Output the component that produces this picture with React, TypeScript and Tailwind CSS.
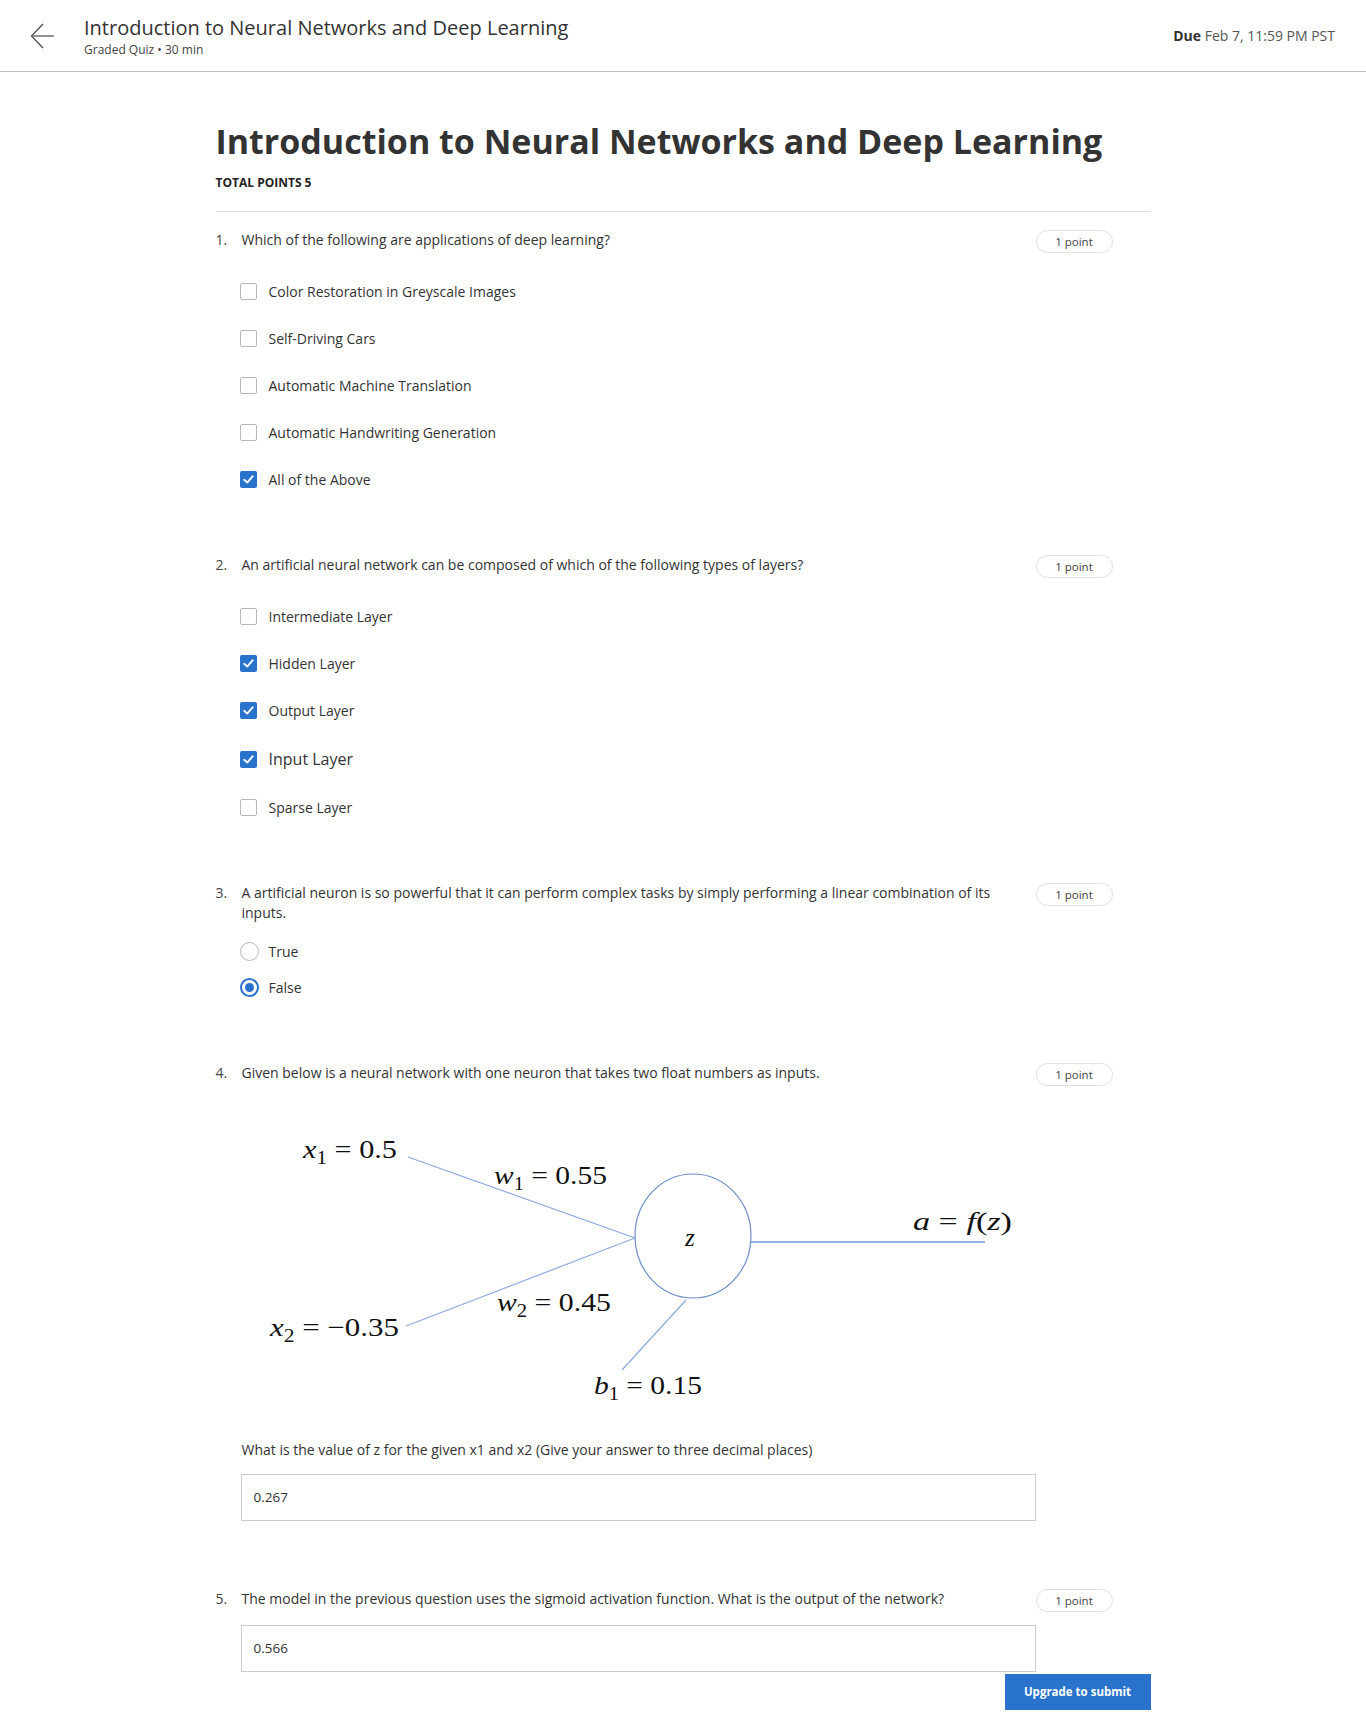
import React from "react";

const font = { fontFamily: "'Open Sans', 'Liberation Sans', sans-serif" };

function Pill() {
  return (
    <div className="ml-[24px] mr-[38px] flex h-[23px] w-[77px] shrink-0 items-center justify-center rounded-full border border-[#e1e1e1] text-[11.5px] text-[#444]">
      1 point
    </div>
  );
}

function Check({ checked }: { checked: boolean }) {
  if (checked) {
    return (
      <div className="flex h-[17px] w-[17px] shrink-0 items-center justify-center rounded-[2px] bg-[#2a73cc]">
        <svg width="13" height="13" viewBox="0 0 13 13" fill="none">
          <path d="M2.2 6.8 L5.2 9.6 L10.8 3.2" stroke="#fff" strokeWidth="1.9" strokeLinecap="round" strokeLinejoin="round" />
        </svg>
      </div>
    );
  }
  return <div className="h-[17px] w-[17px] shrink-0 rounded-[2px] border-[1.5px] border-[#b8b8b8] bg-white" />;
}

function Radio({ checked }: { checked: boolean }) {
  if (checked) {
    return (
      <div className="flex h-[19px] w-[19px] shrink-0 items-center justify-center rounded-full border-[2px] border-[#2a73cc]">
        <div className="h-[9px] w-[9px] rounded-full bg-[#2a73cc]" />
      </div>
    );
  }
  return <div className="h-[19px] w-[19px] shrink-0 rounded-full border-[1.5px] border-[#b8b8b8]" />;
}

function QuestionHead({ n, children }: { n: number; children: React.ReactNode }) {
  return (
    <div className="flex items-start">
      <div className="w-[26px] shrink-0 text-[14px] leading-[20px] text-[#444]">{n}.</div>
      <div className="flex-1 text-[14px] leading-[20px] text-[#333]">{children}</div>
      <Pill />
    </div>
  );
}

function CheckOption({ label, checked, big }: { label: string; checked: boolean; big?: boolean }) {
  return (
    <div className={big ? "flex h-[50px] items-center gap-[12px] pl-[24px]" : "flex h-[47px] items-center gap-[12px] pl-[24px]"}>
      <Check checked={checked} />
      <span className={big ? "text-[16px] text-[#333]" : "text-[14px] text-[#333]"}>{label}</span>
    </div>
  );
}

function RadioOption({ label, checked }: { label: string; checked: boolean }) {
  return (
    <div className="flex h-[36px] items-center gap-[10px] pl-[24px]">
      <Radio checked={checked} />
      <span className="text-[14px] text-[#333]">{label}</span>
    </div>
  );
}

function Diagram() {
  const serif = "'Liberation Serif', 'DejaVu Serif', serif";
  const line = "#8eaadb";
  return (
    <svg width="800" height="320" viewBox="0 0 800 320" className="block">
      <line x1="166" y1="52" x2="393" y2="133" stroke={line} strokeWidth="1.2" />
      <line x1="164" y1="221" x2="393" y2="133" stroke={line} strokeWidth="1.2" />
      <line x1="444" y1="195" x2="380" y2="265" stroke={line} strokeWidth="1.2" />
      <line x1="509" y1="137" x2="743" y2="137" stroke="#7c9bd6" strokeWidth="1.4" />
      <ellipse cx="451" cy="131" rx="58" ry="62" fill="#fff" stroke="#6f8cc4" strokeWidth="1.2" />
      <g fontFamily={serif} fill="#111" fontSize="26">
        <text x="61" y="53" textLength="94" lengthAdjust="spacingAndGlyphs">
          <tspan fontStyle="italic">x</tspan>
          <tspan fontSize="18" dy="6">1</tspan>
          <tspan dy="-6"> = 0.5</tspan>
        </text>
        <text x="252" y="79" textLength="113" lengthAdjust="spacingAndGlyphs">
          <tspan fontStyle="italic">w</tspan>
          <tspan fontSize="18" dy="6">1</tspan>
          <tspan dy="-6"> = 0.55</tspan>
        </text>
        <text x="443" y="141" fontStyle="italic" fontSize="25">z</text>
        <text x="671" y="125" textLength="99" lengthAdjust="spacingAndGlyphs">
          <tspan fontStyle="italic">a</tspan>
          <tspan> = </tspan>
          <tspan fontStyle="italic">f</tspan>
          <tspan>(</tspan>
          <tspan fontStyle="italic">z</tspan>
          <tspan>)</tspan>
        </text>
        <text x="255" y="206" textLength="114" lengthAdjust="spacingAndGlyphs">
          <tspan fontStyle="italic">w</tspan>
          <tspan fontSize="18" dy="6">2</tspan>
          <tspan dy="-6"> = 0.45</tspan>
        </text>
        <text x="28" y="231" textLength="129" lengthAdjust="spacingAndGlyphs">
          <tspan fontStyle="italic">x</tspan>
          <tspan fontSize="18" dy="6">2</tspan>
          <tspan dy="-6"> = −0.35</tspan>
        </text>
        <text x="352" y="289" textLength="108" lengthAdjust="spacingAndGlyphs">
          <tspan fontStyle="italic">b</tspan>
          <tspan fontSize="18" dy="6">1</tspan>
          <tspan dy="-6"> = 0.15</tspan>
        </text>
      </g>
    </svg>
  );
}

export default function App() {
  return (
    <div className="min-h-[1733px] w-full bg-white" style={font}>
      <header className="flex h-[72px] items-center justify-between border-b border-[#bdbdbd] pr-[31px]">
        <div className="flex items-center">
          <div className="ml-[30px] mr-[30px] flex h-[30px] w-[24px] items-center">
            <svg width="24" height="26" viewBox="0 0 24 26" fill="none">
              <path d="M13 1 L1.5 13 L13 25" stroke="#555" strokeWidth="1.4" />
              <path d="M1.5 13 H24" stroke="#666" strokeWidth="1.4" />
            </svg>
          </div>
          <div className="flex flex-col">
            <div className="text-[20px] leading-[26px] text-[#333]">Introduction to Neural Networks and Deep Learning</div>
            <div className="mt-[1px] text-[12px] leading-[15px] text-[#444]">Graded Quiz • 30 min</div>
          </div>
        </div>
        <div className="text-[14px] text-[#555]">
          <span className="font-bold text-[#333]">Due</span> Feb 7, 11:59 PM PST
        </div>
      </header>

      <main className="mx-auto w-[935px]">
        <h1 className="mt-[47px] text-[34px] font-bold leading-[44px] text-[#333]">
          Introduction to Neural Networks and Deep Learning
        </h1>
        <div className="mt-[12px] text-[12px] font-bold leading-[16px] text-[#222]">TOTAL POINTS 5</div>
        <div className="mt-[20px] h-px w-full bg-[#dcdcdc]" />

        <section className="mt-[18px]">
          <QuestionHead n={1}>Which of the following are applications of deep learning?</QuestionHead>
          <div className="mt-[15px]">
            <CheckOption label="Color Restoration in Greyscale Images" checked={false} />
            <CheckOption label="Self-Driving Cars" checked={false} />
            <CheckOption label="Automatic Machine Translation" checked={false} />
            <CheckOption label="Automatic Handwriting Generation" checked={false} />
            <CheckOption label="All of the Above" checked={true} />
          </div>
        </section>

        <section className="mt-[52px]">
          <QuestionHead n={2}>An artificial neural network can be composed of which of the following types of layers?</QuestionHead>
          <div className="mt-[15px]">
            <CheckOption label="Intermediate Layer" checked={false} />
            <CheckOption label="Hidden Layer" checked={true} />
            <CheckOption label="Output Layer" checked={true} />
            <CheckOption label="Input Layer" checked={true} big />
            <CheckOption label="Sparse Layer" checked={false} />
          </div>
        </section>

        <section className="mt-[52px]">
          <QuestionHead n={3}>
            A artificial neuron is so powerful that it can perform complex tasks by simply performing a linear combination of its inputs.
          </QuestionHead>
          <div className="mt-[10px]">
            <RadioOption label="True" checked={false} />
            <RadioOption label="False" checked={true} />
          </div>
        </section>

        <section className="mt-[58px]">
          <QuestionHead n={4}>Given below is a neural network with one neuron that takes two float numbers as inputs.</QuestionHead>
          <div className="ml-[26px] mt-[19px]">
            <Diagram />
          </div>
          <div className="ml-[26px] mt-[15px] text-[14px] leading-[20px] text-[#333]">
            What is the value of z for the given x1 and x2 (Give your answer to three decimal places)
          </div>
          <div className="ml-[25px] mt-[14px] flex h-[47px] w-[795px] items-center border border-[#c9ccd3] px-[12px] text-[13.5px] text-[#333]">
            0.267
          </div>
        </section>

        <section className="mt-[68px]">
          <QuestionHead n={5}>The model in the previous question uses the sigmoid activation function. What is the output of the network?</QuestionHead>
          <div className="ml-[25px] mt-[13px] flex h-[47px] w-[795px] items-center border border-[#c9ccd3] px-[12px] text-[13.5px] text-[#333]">
            0.566
          </div>
          <div className="flex justify-end">
            <div className="mt-[2px] flex h-[36px] w-[146px] items-center justify-center bg-[#2a73cc] text-[11.5px] font-bold text-white">
              Upgrade to submit
            </div>
          </div>
        </section>
      </main>
    </div>
  );
}
